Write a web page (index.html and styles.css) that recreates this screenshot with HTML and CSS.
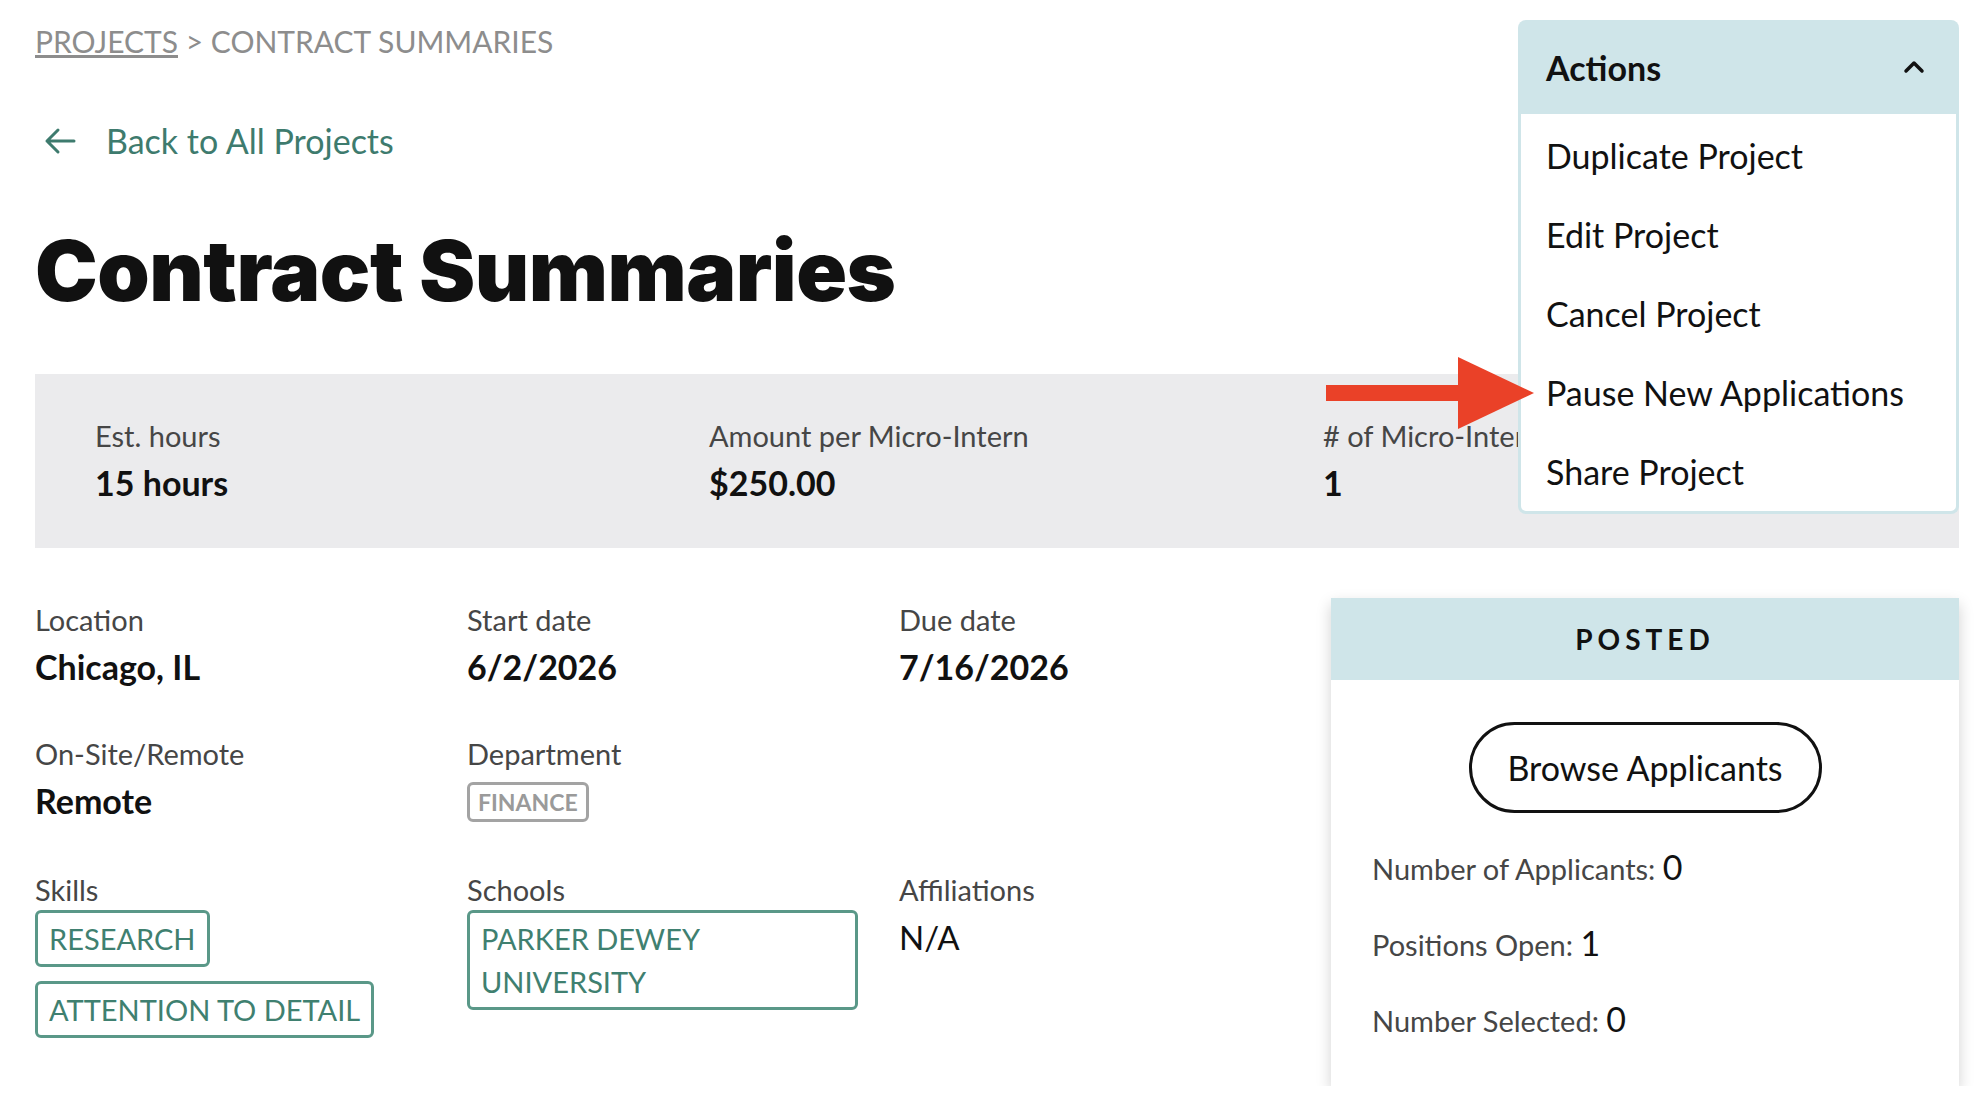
FILE: index.html
```html
<!DOCTYPE html>
<html lang="en">
<head>
  <meta charset="UTF-8" />
  <meta name="viewport" content="width=device-width, initial-scale=1" />
  <title>Contract Summaries</title>
  <link rel="stylesheet" href="styles.css">
</head>
<body>
  <div class="page">
    <header class="top">
      <div class="intro">
        <nav class="crumbs"><a href="#">PROJECTS</a> &gt; CONTRACT SUMMARIES</nav>
        <a class="back" href="#">
          <svg width="32" height="28" viewBox="0 0 32 28" fill="none" stroke="currentColor" stroke-width="3" stroke-linecap="round" stroke-linejoin="round">
            <path d="M30 14H3M14 3L3 14l11 11" />
          </svg>
          Back to All Projects
        </a>
        <h1>Contract Summaries</h1>
      </div>

      <div class="actions">
        <button class="actions-head" type="button">
          Actions
          <svg width="22" height="14" viewBox="0 0 22 14" fill="none" stroke="currentColor" stroke-width="3.5" stroke-linecap="round" stroke-linejoin="round">
            <path d="M3 11l8-8 8 8" />
          </svg>
        </button>
        <ul class="actions-menu">
          <li><a href="#">Duplicate Project</a></li>
          <li><a href="#">Edit Project</a></li>
          <li><a href="#">Cancel Project</a></li>
          <li><a href="#">Pause New Applications</a></li>
          <li><a href="#">Share Project</a></li>
        </ul>
      </div>
    </header>

    <section class="stats">
      <div class="stat">
        <div class="label">Est. hours</div>
        <div class="value">15 hours</div>
      </div>
      <div class="stat">
        <div class="label">Amount per Micro-Intern</div>
        <div class="value">$250.00</div>
      </div>
      <div class="stat">
        <div class="label"># of Micro-Interns</div>
        <div class="value">1</div>
      </div>
    </section>

    <div class="content">
      <div class="details">
        <div class="field">
          <div class="label">Location</div>
          <div class="value">Chicago, IL</div>
        </div>
        <div class="field">
          <div class="label">Start date</div>
          <div class="value">6/2/2026</div>
        </div>
        <div class="field">
          <div class="label">Due date</div>
          <div class="value">7/16/2026</div>
        </div>

        <div class="field">
          <div class="label">On-Site/Remote</div>
          <div class="value">Remote</div>
        </div>
        <div class="field">
          <div class="label">Department</div>
          <div class="tags"><span class="tag tag-gray">FINANCE</span></div>
        </div>
        <div class="field"></div>

        <div class="field">
          <div class="label">Skills</div>
          <div class="tags">
            <span class="tag">RESEARCH</span>
            <span class="tag">ATTENTION TO DETAIL</span>
          </div>
        </div>
        <div class="field">
          <div class="label">Schools</div>
          <div class="tags"><span class="tag">PARKER DEWEY UNIVERSITY</span></div>
        </div>
        <div class="field">
          <div class="label">Affiliations</div>
          <div class="value plain">N/A</div>
        </div>
      </div>

      <aside class="status-card">
        <div class="status-head">POSTED</div>
        <div class="status-body">
          <button class="browse" type="button">Browse Applicants</button>
          <p class="count">Number of Applicants: <span>0</span></p>
          <p class="count">Positions Open: <span>1</span></p>
          <p class="count">Number Selected: <span>0</span></p>
        </div>
      </aside>
    </div>

    <svg class="pointer" width="210" height="72" viewBox="0 0 210 72">
      <rect x="0" y="28" width="136" height="16" fill="#ea4128" />
      <polygon points="132,0 208,36 132,72" fill="#ea4128" />
    </svg>
  </div>
</body>
</html>
```

FILE: styles.css
```css
body {
  margin: 0;
  font-family: 'Lato', 'Open Sans', sans-serif;
  background-color: #fff;
  color: #111;
}

.page {
  position: relative;
  padding: 0 25px 0 35px;
}

.top {
  display: flex;
  justify-content: space-between;
  align-items: flex-start;
}

.crumbs {
  margin-top: 23px;
  font-size: 30px;
  color: #8d8d8d;
}

.crumbs a {
  color: #8d8d8d;
}

.back {
  display: flex;
  align-items: center;
  gap: 30px;
  margin-top: 61px;
  margin-left: 9px;
  font-size: 34px;
  color: #3e7b6e;
  text-decoration: none;
}

h1 {
  margin: 60px 0 0;
  font-family: 'Inter', 'Roboto', sans-serif;
  font-weight: 900;
  font-size: 84px;
  letter-spacing: -0.5px;
  line-height: 1.2;
}

/* actions dropdown */
.actions {
  position: relative;
  width: 441px;
  margin-top: 20px;
  z-index: 5;
}

.actions-head {
  display: flex;
  justify-content: space-between;
  align-items: center;
  width: 100%;
  height: 94px;
  padding: 0 34px 0 28px;
  border: none;
  border-radius: 8px 8px 0 0;
  background-color: #cfe5e9;
  font-family: inherit;
  font-size: 34px;
  font-weight: bold;
  color: #111;
}

.actions-menu {
  position: absolute;
  top: 100%;
  left: 0;
  right: 0;
  margin: 0;
  padding: 2px 0 0;
  list-style: none;
  background-color: #fff;
  border: 3px solid #cfe5e9;
  border-top: none;
  border-radius: 0 0 8px 8px;
}

.actions-menu li a {
  display: block;
  padding-left: 25px;
  line-height: 79px;
  font-size: 34px;
  color: #111;
  text-decoration: none;
}

/* stats band */
.stats {
  display: grid;
  grid-template-columns: repeat(3, 1fr);
  column-gap: 38px;
  margin-top: 52px;
  padding: 44px 60px 46px;
  background-color: #ebebed;
}

.label {
  font-size: 29px;
  line-height: 36px;
  color: #464646;
}

.value {
  margin-top: 10px;
  font-size: 34px;
  font-weight: bold;
  line-height: 38px;
}

.value.plain {
  font-weight: normal;
  font-size: 33px;
}

/* details */
.content {
  display: flex;
  align-items: flex-start;
  margin-top: 54px;
}

.details {
  flex: 1;
  display: grid;
  grid-template-columns: repeat(3, 1fr);
  row-gap: 50px;
}

.field {
  padding-right: 41px;
}

.tags {
  display: flex;
  flex-direction: column;
  align-items: flex-start;
  gap: 14px;
  margin-top: 2px;
}

.tag {
  display: inline-block;
  padding: 4px 11px;
  border: 3px solid #5a9888;
  border-radius: 6px;
  font-size: 29px;
  line-height: 43px;
  color: #3f8070;
}

.tag-gray {
  margin-top: 8px;
  padding: 1px 8px;
  border-color: #a3a3a3;
  font-size: 23px;
  font-weight: bold;
  line-height: 32px;
  color: #9a9a9a;
}

/* status card */
.status-card {
  width: 628px;
  margin-top: -4px;
  box-shadow: 0 6px 14px rgba(0, 0, 0, 0.18);
}

.status-head {
  height: 82px;
  line-height: 82px;
  background-color: #cfe5e9;
  text-align: center;
  font-size: 28px;
  font-weight: bold;
  letter-spacing: 5px;
}

.status-body {
  padding: 42px 41px 45px;
  background-color: #fff;
}

.browse {
  display: block;
  margin: 0 auto 34px;
  width: 353px;
  height: 91px;
  border: 3px solid #111;
  border-radius: 46px;
  background-color: #fff;
  font-family: inherit;
  font-size: 34px;
  color: #111;
}

.count {
  margin: 0;
  font-size: 29px;
  line-height: 40px;
  color: #464646;
}

.count + .count {
  margin-top: 34px;
}

.count span {
  font-size: 34px;
  color: #111;
}

.pointer {
  position: absolute;
  left: 1326px;
  top: 357px;
  z-index: 10;
}
```
